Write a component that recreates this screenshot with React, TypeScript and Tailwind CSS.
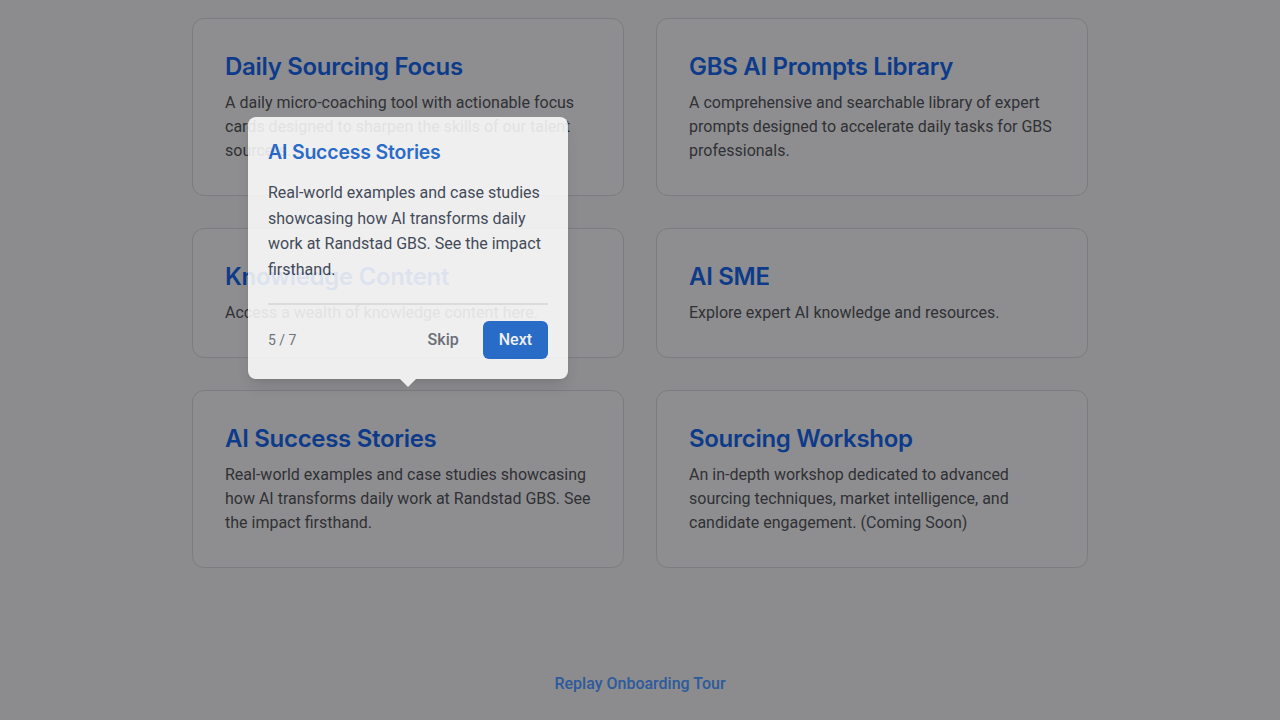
import React from "react";

const cards = [
  {
    title: "Daily Sourcing Focus",
    text: "A daily micro-coaching tool with actionable focus cards designed to sharpen the skills of our talent sourcers.",
  },
  {
    title: "GBS AI Prompts Library",
    text: "A comprehensive and searchable library of expert prompts designed to accelerate daily tasks for GBS professionals.",
  },
  {
    title: "Knowledge Content",
    text: "Access a wealth of knowledge content here.",
  },
  {
    title: "AI SME",
    text: "Explore expert AI knowledge and resources.",
  },
  {
    title: "AI Success Stories",
    text: "Real-world examples and case studies showcasing how AI transforms daily work at Randstad GBS. See the impact firsthand.",
  },
  {
    title: "Sourcing Workshop",
    text: "An in-depth workshop dedicated to advanced sourcing techniques, market intelligence, and candidate engagement. (Coming Soon)",
  },
];

const headFont = { fontFamily: "Inter, 'Noto Sans', sans-serif" };

export default function App() {
  return (
    <div
      className="relative min-h-screen w-full overflow-hidden bg-[#8c8c8e]"
      style={{ fontFamily: "Roboto, 'Liberation Sans', sans-serif" }}
    >
      <div className="mx-auto max-w-[896px] pt-[18px]">
        <div className="grid grid-cols-2 gap-8">
          {cards.map((c) => (
            <div
              key={c.title}
              className="rounded-xl border border-[#7c7c80] bg-[#8e8e90] p-8"
            >
              <h2
                className="mb-2 text-[24px] font-semibold leading-8 tracking-[-0.3px] text-[#0d3b8a]"
                style={headFont}
              >
                {c.title}
              </h2>
              <p className="text-base leading-6 text-[#303135]">{c.text}</p>
            </div>
          ))}
        </div>
        <div className="mt-[104px] flex justify-center">
          <button className="text-base font-medium leading-6 text-[#2d5a9c]">
            Replay Onboarding Tour
          </button>
        </div>
      </div>

      {/* Tour popover */}
      <div className="absolute left-[248px] top-[117px] w-[320px] opacity-[0.86]">
        <div className="rounded-lg bg-white px-5 pb-5 pt-[21px] shadow-lg">
          <h3
            className="text-[19.5px] font-semibold leading-7 tracking-[-0.2px] text-[#1967d2]"
            style={headFont}
          >
            AI Success Stories
          </h3>
          <p className="mt-[14px] text-base leading-[1.6] text-[#374151]">
            Real-world examples and case studies showcasing how AI transforms
            daily work at Randstad GBS. See the impact firsthand.
          </p>
          <div className="mt-[21px] flex items-center border-t-2 border-[#e8e8ea] pt-[16px]">
            <span className="text-sm text-[#6b6f76]">5 / 7</span>
            <div className="ml-auto flex items-center gap-2">
              <button className="px-4 py-2 text-base font-medium leading-[22px] text-[#666a72]">
                Skip
              </button>
              <button className="rounded-md bg-[#1967d2] px-4 py-2 text-base font-medium leading-[22px] text-white">
                Next
              </button>
            </div>
          </div>
        </div>
        <div className="mx-auto h-0 w-0 border-x-8 border-t-8 border-x-transparent border-t-white" />
      </div>
    </div>
  );
}
